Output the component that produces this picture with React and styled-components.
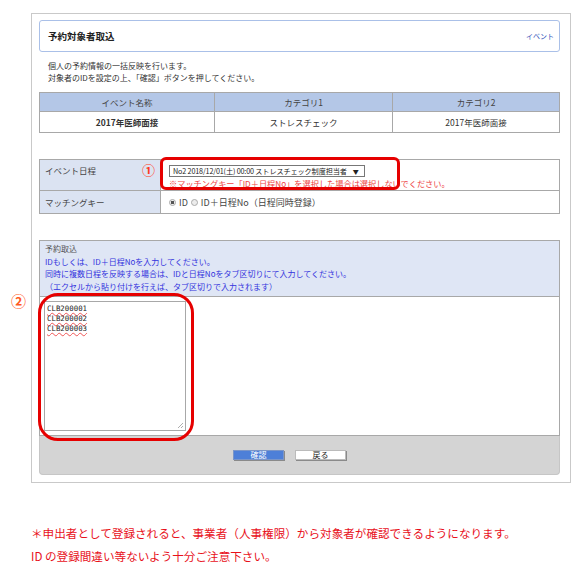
import React from 'react';
import styled, { createGlobalStyle } from 'styled-components';

const GlobalStyle = createGlobalStyle`
  body {
    margin: 0;
    background: #ffffff;
    font-family: 'Noto Sans CJK JP', 'Noto Sans', sans-serif;
    color: #333;
  }
`;

const Page = styled.div`
  position: relative;
  width: 585px;
  padding: 13px 0 0 31px;
  box-sizing: border-box;
`;

const Frame = styled.div`
  width: 540px;
  box-sizing: border-box;
  border: 1px solid #c9c9c9;
  padding: 6px 10px 7px 7px;
`;

const HeaderBox = styled.div`
  display: flex;
  align-items: center;
  justify-content: space-between;
  height: 32px;
  box-sizing: border-box;
  border: 1px solid #aac0e8;
  border-radius: 3px;
  padding: 0 5px 0 8px;
`;

const HeaderTitle = styled.span`
  font-size: 9.5px;
  font-weight: 700;
  color: #222;
`;

const HeaderLink = styled.span`
  font-size: 7px;
  color: #3355bb;
`;

const Description = styled.p`
  margin: 8px 0 0 9px;
  font-size: 8px;
  line-height: 12px;
  color: #333;
`;

const Grid = styled.table`
  width: 100%;
  border-collapse: collapse;
  margin-top: ${(p) => p.$gap}px;
  font-size: 8.5px;
`;

const HeadCell = styled.th`
  background: #b4c7e7;
  border: 1px solid #a8a8a8;
  height: 18px;
  padding: 0;
  font-weight: 400;
  color: #444;
  width: ${(p) => p.$w};
`;

const BodyCell = styled.td`
  border: 1px solid #a8a8a8;
  height: 20px;
  padding: 0;
  text-align: center;
  color: #333;
  font-weight: ${(p) => (p.$bold ? 700 : 400)};
`;

const LabelCell = styled.td`
  width: 121px;
  box-sizing: border-box;
  background: #dbe3f2;
  border: 1px solid #a8a8a8;
  padding: 0 0 0 5px;
  vertical-align: ${(p) => (p.$top ? 'top' : 'middle')};
  color: #444;
  height: ${(p) => p.$h}px;
`;

const LabelInner = styled.div`
  display: flex;
  justify-content: space-between;
  align-items: center;
  padding-top: ${(p) => (p.$top ? 3 : 0)}px;
  padding-right: 5px;
`;

const Marker = styled.span`
  font-size: ${(p) => p.$size}px;
  font-weight: 700;
  color: ${(p) => p.$color};
  line-height: 1;
`;

const ValueCell = styled.td`
  position: relative;
  border: 1px solid #a8a8a8;
  padding: 0 0 0 8px;
  color: #444;
`;

const FieldStack = styled.div`
  display: flex;
  flex-direction: column;
  align-items: flex-start;
  padding-top: 4px;
  gap: 1px;
`;

const SelectBox = styled.div`
  display: flex;
  align-items: center;
  gap: 6px;
  height: 12px;
  box-sizing: border-box;
  border: 1px solid #777;
  background: #fff;
  padding: 0 5px 0 3px;
  font-size: 7.2px;
  letter-spacing: -0.15px;
  color: #222;
  white-space: nowrap;
`;

const Caret = styled.span`
  font-size: 6px;
`;

const Note = styled.span`
  font-size: 8.2px;
  line-height: 11px;
  color: #ee4444;
  white-space: nowrap;
`;

const Highlight = styled.div`
  position: absolute;
  border: 3px solid #e60000;
  border-radius: ${(p) => p.$r}px;
  pointer-events: none;
`;

const RadioRow = styled.div`
  display: flex;
  align-items: center;
  gap: 3px;
  font-size: 9px;
`;

const Radio = styled.span`
  display: inline-block;
  width: 7px;
  height: 7px;
  box-sizing: border-box;
  border-radius: 50%;
  border: 1px solid #aaa;
  background: ${(p) => (p.$on ? 'radial-gradient(circle, #555 0 1.6px, #eee 2px)' : '#ececec')};
`;

const ImportBox = styled.div`
  margin-top: 26px;
  border: 1px solid #a8a8a8;
  border-bottom: none;
`;

const ImportHead = styled.div`
  background: #dfe6f5;
  border-bottom: 1px solid #a8a8a8;
  padding: 2px 5px 3px;
  font-size: 8px;
  line-height: 12.5px;
`;

const ImportTitle = styled.div`
  color: #555;
`;

const BlueLine = styled.div`
  color: #3333dd;
`;

const ImportBody = styled.div`
  position: relative;
  height: 139px;
  padding: 4px 0 0 4px;
  box-sizing: border-box;
  border-bottom: 1px solid #a8a8a8;
`;

const InputArea = styled.div`
  position: relative;
  width: 142px;
  height: 130px;
  box-sizing: border-box;
  border: 1px solid #a8a8a8;
  padding: 2px 2px;
  font-family: 'DejaVu Sans Mono', 'Liberation Mono', monospace;
  font-size: 7.4px;
  line-height: 10px;
  color: #222;
`;

const IdLine = styled.div`
  span {
    text-decoration: underline wavy #e55;
    text-decoration-thickness: 1px;
    text-underline-offset: 1px;
  }
`;

const Grip = styled.svg`
  position: absolute;
  right: 1px;
  bottom: 1px;
`;

const Footer = styled.div`
  display: flex;
  justify-content: center;
  align-items: center;
  gap: 11px;
  height: 38px;
  padding-right: 20px;
  background: #d4d4d4;
  border: 1px solid #c6c6c6;
  border-top: none;
  border-radius: 0 0 4px 4px;
`;

const Button = styled.button`
  width: 51px;
  height: 10px;
  padding: 0;
  font-family: inherit;
  font-size: 8px;
  line-height: 8px;
  color: ${(p) => (p.$primary ? '#ffffff' : '#222')};
  background: ${(p) => (p.$primary ? '#4d7fd8' : '#ffffff')};
  border: 1px solid ${(p) => (p.$primary ? '#7a95c8' : '#bbb')};
  box-shadow: 1px 1px 0 #8a8a8a;
  margin-top: -1px;
`;

const Notes = styled.div`
  margin: 39px 0 0 0;
  font-size: 11.6px;
  line-height: 23px;
  color: #e8101a;
`;

const Annotation = styled.span`
  position: absolute;
  left: 11px;
  top: 290px;
  font-size: 15px;
  font-weight: 700;
  color: #ff5a1e;
`;

const ids = ['CLB200001', 'CLB200002', 'CLB200003'];

export default function App() {
  return (
    <>
      <GlobalStyle />
      <Page>
        <Annotation>②</Annotation>
        <Frame>
          <HeaderBox>
            <HeaderTitle>予約対象者取込</HeaderTitle>
            <HeaderLink>イベント</HeaderLink>
          </HeaderBox>

          <Description>
            個人の予約情報の一括反映を行います。
            <br />
            対象者のIDを設定の上、「確認」ボタンを押してください。
          </Description>

          <Grid $gap={8}>
            <thead>
              <tr>
                <HeadCell $w="174px">イベント名称</HeadCell>
                <HeadCell $w="177px">カテゴリ1</HeadCell>
                <HeadCell>カテゴリ2</HeadCell>
              </tr>
            </thead>
            <tbody>
              <tr>
                <BodyCell $bold>2017年医師面接</BodyCell>
                <BodyCell>ストレスチェック</BodyCell>
                <BodyCell>2017年医師面接</BodyCell>
              </tr>
            </tbody>
          </Grid>

          <Grid $gap={26}>
            <tbody>
              <tr>
                <LabelCell $h={31} $top>
                  <LabelInner $top>
                    イベント日程
                    <Marker $size={13} $color="#ff3b1e">①</Marker>
                  </LabelInner>
                </LabelCell>
                <ValueCell>
                  <FieldStack>
                    <SelectBox>
                      No2 2018/12/01(土) 00:00 ストレスチェック制度担当者
                      <Caret>▼</Caret>
                    </SelectBox>
                    <Note>※マッチングキー「ID＋日程No」を選択した場合は選択しないでください。</Note>
                  </FieldStack>
                  <Highlight $r={6} style={{ left: -1, top: -3, width: 234, height: 27 }} />
                </ValueCell>
              </tr>
              <tr>
                <LabelCell $h={23}>マッチングキー</LabelCell>
                <ValueCell>
                  <RadioRow>
                    <Radio $on /> ID <Radio /> ID＋日程No（日程同時登録）
                  </RadioRow>
                </ValueCell>
              </tr>
            </tbody>
          </Grid>

          <ImportBox>
            <ImportHead>
              <ImportTitle>予約取込</ImportTitle>
              <BlueLine>IDもしくは、ID＋日程Noを入力してください。</BlueLine>
              <BlueLine>同時に複数日程を反映する場合は、IDと日程Noをタブ区切りにて入力してください。</BlueLine>
              <BlueLine>（エクセルから貼り付けを行えば、タブ区切りで入力されます）</BlueLine>
            </ImportHead>
            <ImportBody>
              <InputArea>
                {ids.map((id) => (
                  <IdLine key={id}>
                    <span>{id}</span>
                  </IdLine>
                ))}
                <Grip width="7" height="7" viewBox="0 0 7 7">
                  <path d="M6 1 L1 6 M6 4 L4 6" stroke="#999" strokeWidth="0.8" />
                </Grip>
              </InputArea>
              <Highlight $r={20} style={{ left: -2, top: -4, width: 150, height: 142 }} />
            </ImportBody>
          </ImportBox>

          <Footer>
            <Button $primary>確認</Button>
            <Button>戻る</Button>
          </Footer>
        </Frame>

        <Notes>
          ＊申出者として登録されると、事業者（人事権限）から対象者が確認できるようになります。
          <br />
          ID の登録間違い等ないよう十分ご注意下さい。
        </Notes>
      </Page>
    </>
  );
}
